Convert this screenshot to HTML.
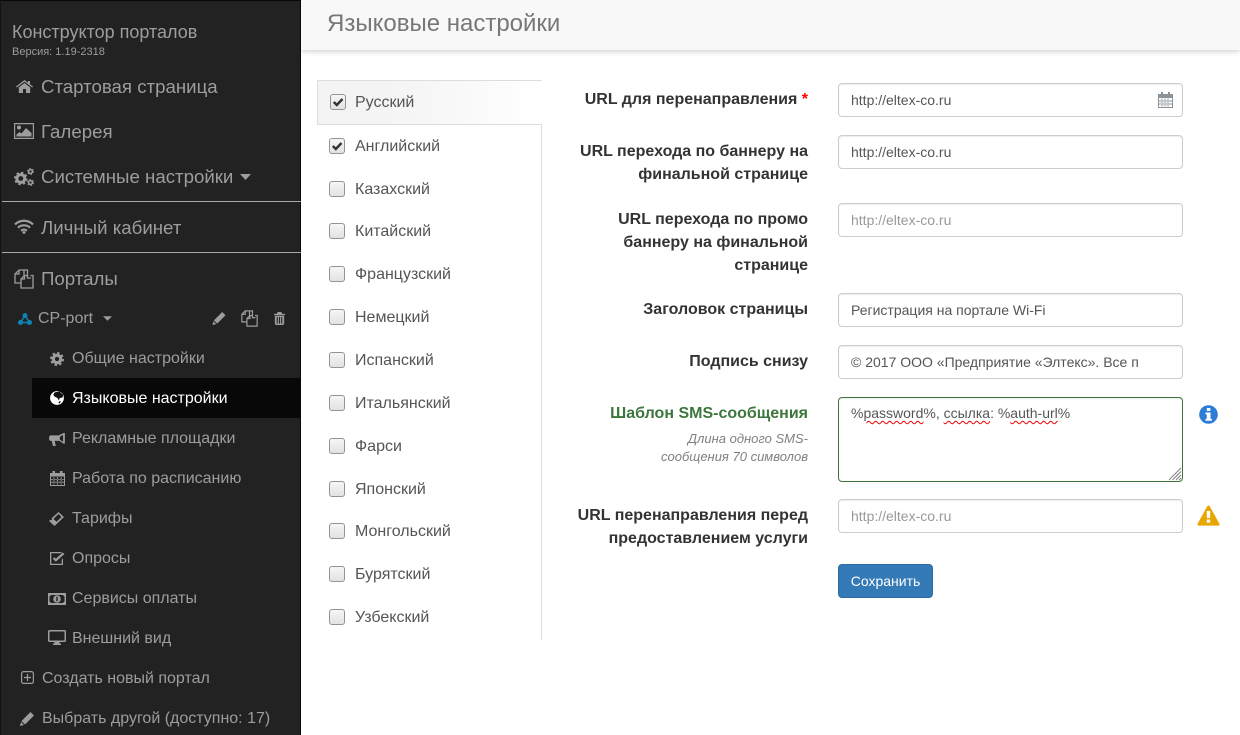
<!DOCTYPE html>
<html lang="ru"><head><meta charset="utf-8"><title>Языковые настройки</title>
<style>
html,body{margin:0;padding:0;width:1240px;height:735px;overflow:hidden;background:#fff;font-family:"Liberation Sans",sans-serif;font-size:14px;color:#333}
*{box-sizing:border-box}
.a{position:absolute;white-space:nowrap}
#side{position:absolute;left:0;top:0;width:301px;height:735px;background:#222;border-left:1px solid #161024;border-right:1px solid #080808;border-top:1px solid #080808}
.s{position:absolute;white-space:nowrap;color:#9d9d9d;line-height:20px}
.m{font-size:18.67px;left:41px}
.n{font-size:16px;left:72px}
.i{position:absolute;fill:#9d9d9d}
.hr{position:absolute;left:2px;width:299px;height:1px;background:#a8a8a8}
.lb{position:absolute;right:432px;text-align:right;font-weight:bold;font-size:16px;line-height:23px;color:#333;white-space:nowrap}
.inp{position:absolute;left:838px;width:345px;height:34px;border:1px solid #ccc;border-radius:4px;background:#fff;box-shadow:inset 0 1px 1px rgba(0,0,0,.075);padding:6px 12px;line-height:20px;font-size:14px;color:#555;white-space:nowrap;overflow:hidden}
.ph{color:#999}
.lang{position:absolute;left:355px;font-size:16px;line-height:20px;color:#555;white-space:nowrap}
.cb{position:absolute;left:329px;width:16px;height:16px;border:1px solid #949494;border-radius:3px;background:linear-gradient(#f6f6f6,#e2e2e2)}
.cb svg{position:absolute;left:0;top:0}
.sq{text-decoration:underline wavy #e00;text-decoration-thickness:1px;text-underline-offset:2px}
</style></head><body>

<div class="a" style="left:301px;top:0;width:939px;height:50px;background:#f8f8f8;box-shadow:0 1px 6px rgba(0,0,0,.22)"></div>
<div class="a" style="left:327px;top:10px;font-size:24px;line-height:28px;color:#777">Языковые настройки</div>

<div id="side"></div>
<div class="s" style="left:12px;top:22px;font-size:18px">Конструктор порталов</div>
<div class="s" style="left:12px;top:42px;font-size:11px">Версия: 1.19-2318</div>

<svg class="i" style="left:16px;top:80px" width="17" height="13" viewBox="0 0 17 13"><path d="M8.500 0 0 6.500l.8 1 7.700-5.900 7.700 5.900.8-1-3-2.300V1h-2v1.600z"/><path d="M8.500 3 2.800 7.400V13H7V9h3v4h4.200V7.400z"/></svg>
<div class="s m" style="top:77px">Стартовая страница</div>

<svg class="i" style="left:14px;top:123px" width="20" height="16" viewBox="0 0 20 16"><path fill-rule="evenodd" d="M0 0h20v16H0zM1.200 1.200v13.600h17.600V1.200z"/><circle cx="5" cy="4.500" r="2"/><path d="M2.500 13.500v-2l3-2.500 2 1.500L12 5l5.500 5v3.500z"/></svg>
<div class="s m" style="top:122px">Галерея</div>

<svg class="i" style="left:14px;top:168px" width="20" height="18" viewBox="0 0 20 18"><circle cx="6.800" cy="10.500" r="3.900" fill="none" stroke="#9d9d9d" stroke-width="3"/><circle cx="6.800" cy="10.500" r="5.800" fill="none" stroke="#9d9d9d" stroke-width="2" stroke-dasharray="2.300 2.250"/><circle cx="16.500" cy="3.500" r="1.900" fill="none" stroke="#9d9d9d" stroke-width="1.500"/><circle cx="16.500" cy="3.500" r="3" fill="none" stroke="#9d9d9d" stroke-width="1" stroke-dasharray="1.500 1.650"/><circle cx="16.500" cy="14.500" r="1.900" fill="none" stroke="#9d9d9d" stroke-width="1.500"/><circle cx="16.500" cy="14.500" r="3" fill="none" stroke="#9d9d9d" stroke-width="1" stroke-dasharray="1.500 1.650"/></svg>
<div class="s m" style="top:167px">Системные настройки</div>
<svg class="i" style="left:240px;top:174px" width="11" height="6" viewBox="0 0 11 6"><path d="M0 0h11L5.500 6z"/></svg>

<div class="hr" style="top:201px"></div>

<svg class="i" style="left:14px;top:219px" width="20" height="15" viewBox="0 0 20 15"><g fill="none" stroke="#9d9d9d" stroke-width="2.200"><path d="M1 5.500c5-5 13-5 18 0"/><path d="M4 8.700c3.400-3.200 8.600-3.200 12 0"/><path d="M7 11.700c1.800-1.400 4.200-1.400 6 0"/></g><circle cx="10" cy="13.500" r="1.500"/></svg>
<div class="s m" style="top:218px">Личный кабинет</div>

<div class="hr" style="top:252px"></div>

<svg class="i" style="left:14px;top:269px;fill:none;stroke:#9d9d9d;stroke-width:1.300" width="20" height="20" viewBox="0 0 20 20"><path d="M10 1H5L1 5v9h6M5 1v4H1"/><path d="M13 6.500H10.500L7 10v9h12V6.500h-2.500"/><path d="M10 1v5.500M10 1h3.500V9h3.500M10.500 6.500V10H7"/></svg>
<div class="s m" style="top:269px">Порталы</div>

<svg style="position:absolute;left:18px;top:313px" width="14" height="12" viewBox="0 0 14 12"><g fill="none" stroke="#0d85b8" stroke-width="1.500"><path d="M7 2.500 2.500 9.500h9z"/></g><g fill="#0d85b8"><circle cx="7" cy="2.500" r="2.400"/><circle cx="2.500" cy="9.500" r="2.500"/><circle cx="11.500" cy="9.500" r="2.500"/></g></svg>
<div class="s" style="left:38px;top:309px;font-size:16px">CP-port</div>
<svg class="i" style="left:103px;top:316px" width="9" height="5" viewBox="0 0 10 5"><path d="M0 0h10L5 5z"/></svg>
<svg class="i" style="left:212px;top:312px" width="14" height="13" viewBox="0 0 14 14"><path d="M10.500 0 14 3.500 5 12.500 1.500 9zM1 10l3 3-4 1z"/></svg>
<svg class="i" style="left:241px;top:310px;fill:none;stroke:#9d9d9d;stroke-width:1.400" width="17" height="17" viewBox="0 0 20 20"><path d="M10 1H5L1 5v9h6M5 1v4H1"/><path d="M13 6.500H10.500L7 10v9h12V6.500h-2.500"/><path d="M10 1v5.500M10 1h3.500V9h3.500M10.500 6.500V10H7"/></svg>
<svg class="i" style="left:273px;top:312px" width="13" height="13" viewBox="0 0 12 14"><path fill-rule="evenodd" d="M4 0h4l1 2h3v1.300H0V2h3zM1 4h10v8.500L10 14H2l-1-1.500zM3 5.500v7h1.200v-7zM5.400 5.500v7h1.200v-7zM7.800 5.500v7H9v-7z"/></svg>

<svg class="i" style="left:50px;top:352px" width="14" height="14" viewBox="0 0 15 15"><circle cx="7.500" cy="7.500" r="4" fill="none" stroke="#9d9d9d" stroke-width="3.400"/><circle cx="7.500" cy="7.500" r="6.300" fill="none" stroke="#9d9d9d" stroke-width="2.400" stroke-dasharray="2.470 2.470"/></svg>
<div class="s n" style="top:349px">Общие настройки</div>

<div class="a" style="left:32px;top:378px;width:268px;height:40px;background:#080808"></div>
<svg style="position:absolute;left:50px;top:391px" width="14" height="14" viewBox="0 0 15 15"><circle cx="7.500" cy="7.500" r="7.400" fill="#fff"/><path fill="#111" d="M5 1.500 10 .5l4 3.500-.5 3-3 .5-1 2.500-1.500-2.500L5 6 3.500 4zM9 12l2-1.500.5 1.200-1.500 1.800z"/></svg>
<div class="s n" style="top:389px;color:#fff">Языковые настройки</div>

<svg class="i" style="left:49px;top:433px" width="16" height="13" viewBox="0 0 17 14"><path fill-rule="evenodd" d="M15.500 0H17v11.500h-1.500L11 8.500H6l1.200 5.500H4.200L2.800 8.500H1L0 7V4l1-1.500h9.500zM15 2.200 11.500 4.200v3l3.500 2.200z"/></svg>
<div class="s n" style="top:429px">Рекламные площадки</div>

<svg class="i" style="left:50px;top:471px" width="15" height="15" viewBox="0 0 15 15"><path fill-rule="evenodd" d="M2.500 0h2.500v2h5V0h2.500v2H15v13H0V2h2.500zM1 5.500V14h13V5.500zM3.500 6v7.500h.8V6zM7 6v7.500h1V6zM10.700 6v7.500h.8V6zM1 8h13v.8H1zM1 10.800h13v.8H1z"/></svg>
<div class="s n" style="top:469px">Работа по расписанию</div>

<svg class="i" style="left:49px;top:512px" width="15" height="14" viewBox="0 0 15 14"><path fill-rule="evenodd" d="M9.500 0 15 5 5.500 14 0 9l1.200-1.200.9.6 1-1-.6-1zM9.500 2 4.500 7l3 2.700 5-4.700z"/></svg>
<div class="s n" style="top:509px">Тарифы</div>

<svg class="i" style="left:50px;top:552px" width="15" height="13" viewBox="0 0 15 13"><path fill-rule="evenodd" d="M1.500 0H12l-1.300 1.300H1.300v10.400h10.400V7.500L13 6.200V13H0V0z"/><path d="M5.800 9.800 2.800 6.800l1.500-1.500 1.500 1.500L12.700.5 14.500 2z"/></svg>
<div class="s n" style="top:549px">Опросы</div>

<svg class="i" style="left:48px;top:593px" width="18" height="12" viewBox="0 0 18 12"><path fill-rule="evenodd" d="M0 0h18v12H0zM3.200 2 1.500 3.500v5L3.200 10h11.600l1.700-1.500v-5L14.800 2z"/><circle cx="9" cy="6" r="3.800"/><rect x="8.300" y="3.800" width="1.400" height="4.400" fill="#222"/></svg>
<div class="s n" style="top:589px">Сервисы оплаты</div>

<svg class="i" style="left:48px;top:630px" width="18" height="15" viewBox="0 0 18 15"><path fill-rule="evenodd" d="M1 0h16l1 1v10l-1 1H1L0 11V1zM1.500 1.500v9h15v-9z"/><path d="M6.500 12h5v1.500h1.500V15H5v-1.500h1.500z"/></svg>
<div class="s n" style="top:629px">Внешний вид</div>

<svg style="position:absolute;left:21px;top:671px" width="13" height="13" viewBox="0 0 13 13"><rect x=".6" y=".6" width="11.800" height="11.800" rx="2" fill="none" stroke="#9d9d9d" stroke-width="1.200"/><path d="M6.500 3v7M3 6.500h7" stroke="#9d9d9d" stroke-width="1.200"/></svg>
<div class="s" style="left:42px;top:669px;font-size:16px">Создать новый портал</div>

<svg class="i" style="left:20px;top:712px" width="14" height="14" viewBox="0 0 14 14"><path d="M10.500 0 14 3.500 5 12.500 1.500 9zM1 10l3 3-4 1z"/></svg>
<div class="s" style="left:42px;top:709px;font-size:16px">Выбрать другой (доступно: 17)</div>

<div class="a" style="left:541px;top:124px;width:1px;height:516px;background:#ddd"></div>
<div class="a" style="left:317px;top:80px;width:225px;height:45px;border:1px solid #ddd;border-right:0;background:linear-gradient(90deg,#f3f3f3,#f5f5f5 40%,#fff)"></div>

<div class="cb" style="top:94px;left:330px"><svg width="14" height="14" viewBox="0 0 14 14"><path d="M2.800 7 5.800 10 11.500 4" fill="none" stroke="#333" stroke-width="2.400"/></svg></div>
<div class="lang" style="top:93px">Русский</div>
<div class="cb" style="top:138px"><svg width="14" height="14" viewBox="0 0 14 14"><path d="M2.800 7 5.800 10 11.500 4" fill="none" stroke="#333" stroke-width="2.400"/></svg></div>
<div class="lang" style="top:137px">Английский</div>
<div class="cb" style="top:181px"></div><div class="lang" style="top:180px">Казахский</div>
<div class="cb" style="top:223px"></div><div class="lang" style="top:222px">Китайский</div>
<div class="cb" style="top:266px"></div><div class="lang" style="top:265px">Французский</div>
<div class="cb" style="top:309px"></div><div class="lang" style="top:308px">Немецкий</div>
<div class="cb" style="top:352px"></div><div class="lang" style="top:351px">Испанский</div>
<div class="cb" style="top:395px"></div><div class="lang" style="top:394px">Итальянский</div>
<div class="cb" style="top:438px"></div><div class="lang" style="top:437px">Фарси</div>
<div class="cb" style="top:481px"></div><div class="lang" style="top:480px">Японский</div>
<div class="cb" style="top:523px"></div><div class="lang" style="top:522px">Монгольский</div>
<div class="cb" style="top:566px"></div><div class="lang" style="top:565px">Бурятский</div>
<div class="cb" style="top:609px"></div><div class="lang" style="top:608px">Узбекский</div>

<div class="lb" style="top:88px">URL для перенаправления <span style="color:#f00">*</span></div>
<div class="inp" style="top:83px">http://eltex-co.ru</div>
<svg style="position:absolute;left:1158px;top:92px" width="15" height="16" viewBox="0 0 15 16"><path fill="#8b929a" fill-rule="evenodd" d="M3 0h2v2h5V0h2v2h3v14H0V2h3zM1 6v9h13V6zM3.500 6.500h1v8h-1zM6.500 6.500h1v8h-1zM9.500 6.500h1v8h-1zM1 8.500h13v1H1zM1 11.500h13v1H1z"/></svg>

<div class="lb" style="top:140px">URL перехода по баннеру на<br>финальной странице</div>
<div class="inp" style="top:135px">http://eltex-co.ru</div>

<div class="lb" style="top:208px">URL перехода по промо<br>баннеру на финальной<br>странице</div>
<div class="inp ph" style="top:203px">http://eltex-co.ru</div>

<div class="lb" style="top:298px">Заголовок страницы</div>
<div class="inp" style="top:293px">Регистрация на портале Wi-Fi</div>

<div class="lb" style="top:350px">Подпись снизу</div>
<div class="inp" style="top:345px;padding-right:44px">© 2017 ООО «Предприятие «Элтекс». Все п</div>

<div class="lb" style="top:402px;color:#3c763d">Шаблон SMS-сообщения</div>
<div class="a" style="right:432px;top:430px;text-align:right;font-size:13px;line-height:18px;font-style:italic;color:#808080">Длина одного SMS-<br>сообщения 70 символов</div>
<div class="inp" style="top:397px;height:85px;border-color:#3c763d;padding-top:5px"><span>%<span class="sq">password</span>%, <span class="sq">ссылка</span>: %<span class="sq">auth-url</span>%</span></div>
<svg style="position:absolute;left:1168px;top:467px" width="14" height="14" viewBox="0 0 14 14"><path d="M13 1 1 13M13 4.500 4.500 13M13 8 8 13M13 11l-2 2" stroke="#808080" stroke-width="1" fill="none"/></svg>
<svg style="position:absolute;left:1199px;top:405px" width="19" height="19" viewBox="0 0 19 19"><circle cx="9.500" cy="9.500" r="9.300" fill="#2d7dd8"/><rect x="7.800" y="3" width="3.600" height="3" rx=".5" fill="#fff"/><path d="M6.500 7.500h5v6.300h1.300v2H6.500v-2h1.300V9.500H6.500z" fill="#fff"/></svg>

<div class="lb" style="top:504px">URL перенаправления перед<br>предоставлением услуги</div>
<div class="inp ph" style="top:499px">http://eltex-co.ru</div>
<svg style="position:absolute;left:1197px;top:505px" width="23" height="21" viewBox="0 0 23 21"><path d="M11.500.5c.6 0 1 .3 1.300.8l9.600 17.500c.5 1 0 1.800-1 1.800H1.600c-1 0-1.500-.8-1-1.800L10.200 1.300c.3-.5.700-.8 1.300-.8z" fill="#e8a600"/><rect x="9.800" y="6" width="3.400" height="7" fill="#fff"/><rect x="9.800" y="14.500" width="3.400" height="3.200" fill="#fff"/></svg>

<div class="a" style="left:838px;top:564px;width:95px;height:34px;background:#337ab7;border:1px solid #2e6da4;border-radius:4px;color:#fff;font-size:14px;line-height:32px;text-align:center">Сохранить</div>
</body></html>
